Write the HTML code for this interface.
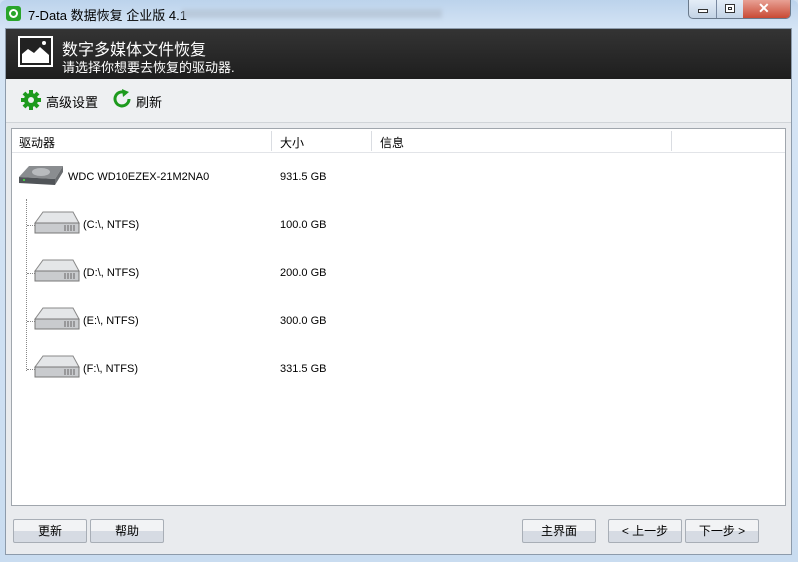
<!DOCTYPE html>
<html><head><meta charset="utf-8"><style>
*{margin:0;padding:0;box-sizing:border-box}
body{width:798px;height:562px;overflow:hidden;background:#cfe0f2;font-family:"Liberation Sans","Noto Sans CJK SC",sans-serif;font-size:12px;color:#000;position:relative}
.frame{position:absolute;left:0;top:0;width:798px;height:562px;background:linear-gradient(#bcd3ec,#d6e5f5 30px,#c9dcf0);border-radius:6px 6px 0 0}
.title{position:absolute;left:28px;top:5px;font-size:13px;color:#000}
.blur{position:absolute;left:182px;top:9px;width:260px;height:9px;background:#b3c2d3;filter:blur(2px);opacity:.7}
.client{position:absolute;left:5px;top:28px;width:787px;height:527px;background:#e9ebee;border:1px solid #8d9bab}
.head{position:absolute;left:0;top:0;width:785px;height:50px;background:linear-gradient(#343434,#1e1e1e);color:#fff}
.toolbar{position:absolute;left:0;top:50px;width:785px;height:44px;background:#eef0f2;border-bottom:1px solid #d0d4d8}
.list{position:absolute;left:5px;top:99px;width:775px;height:378px;background:#fff;border:1px solid #a0a6ad}
.colh{position:absolute;left:0;top:0;width:773px;height:24px;border-bottom:1px solid #e2e4e8;background:#fff}
.colh span{position:absolute;top:5px}
.sep{position:absolute;top:2px;width:1px;height:20px;background:#dadde2}
.row{position:absolute;font-size:11px}
.btn{position:absolute;top:490px;height:24px;border:1px solid #a8aeb6;border-radius:2px;background:linear-gradient(#f2f3f5 50%,#d6dbe3 50%);text-align:center;line-height:22px;font-size:12px}
.dot{position:absolute;border-left:1px dotted #888}
.doth{position:absolute;border-top:1px dotted #888;width:12px}
</style></head><body>
<div class="frame"></div>
<div style="position:absolute;left:6px;top:6px;width:15px;height:15px;background:#2aa52a;border-radius:3px"><div style="position:absolute;left:3px;top:3px;width:9px;height:9px;border:2px solid #fff;border-radius:50%"></div></div>
<div class="title">7-Data 数据恢复 企业版 4.1</div>
<div class="blur"></div>
<div style="position:absolute;left:688px;top:0;width:103px;height:19px;border:1px solid #6a7a8c;border-top:none;border-radius:0 0 5px 5px;overflow:hidden;background:linear-gradient(#e4edf7,#c4d4e6)">
<div style="position:absolute;left:27px;top:0;width:1px;height:19px;background:#7888a0"></div>
<div style="position:absolute;left:54px;top:0;width:48px;height:19px;background:linear-gradient(#e8a195,#c7452f)"></div>
<div style="position:absolute;left:9px;top:9px;width:10px;height:4px;border:1px solid #333;background:#fff"></div>
<div style="position:absolute;left:36px;top:4px;width:10px;height:9px;border:1px solid #333;background:#fff"><div style="margin:2px;width:4px;height:3px;border:1px solid #333"></div></div>
<div style="position:absolute;left:69px;top:0;color:#fff;font-weight:bold;font-size:14px">✕</div>
</div>
<div class="client">
<div class="head">
<div style="position:absolute;left:12px;top:7px;width:35px;height:31px;border:2px solid #fff;background:#222">
<svg width="31" height="27" viewBox="0 0 31 27"><path d="M2 25 L2 16 L8 11 L14 15 L20 9 L29 17 L29 25 Z" fill="#fff"/><circle cx="24" cy="5" r="2" fill="#fff"/></svg></div>
<div style="position:absolute;left:56px;top:7px;font-size:16px">数字多媒体文件恢复</div>
<div style="position:absolute;left:56px;top:28px;font-size:13px">请选择你想要去恢复的驱动器.</div>
</div>
<div class="toolbar">
<svg style="position:absolute;left:14px;top:10px" width="22" height="22" viewBox="0 0 22 22"><g fill="#1d9a1d"><circle cx="11" cy="11" r="7"/><g stroke="#1d9a1d" stroke-width="4"><line x1="11" y1="1" x2="11" y2="21"/><line x1="1" y1="11" x2="21" y2="11"/><line x1="4" y1="4" x2="18" y2="18"/><line x1="18" y1="4" x2="4" y2="18"/></g></g><circle cx="11" cy="11" r="3" fill="#eef0f2"/></svg>
<div style="position:absolute;left:40px;top:13px;font-size:13px">高级设置</div>
<svg style="position:absolute;left:105px;top:9px" width="22" height="22" viewBox="0 0 22 22"><path d="M18 11 A7 7 0 1 1 14 4.6" fill="none" stroke="#1d9a1d" stroke-width="3"/><path d="M11 1 L18 4 L12 9 Z" fill="#1d9a1d"/></svg>
<div style="position:absolute;left:130px;top:13px;font-size:13px">刷新</div>
</div>
<div class="list">
<div class="colh"><span style="left:7px">驱动器</span><div class="sep" style="left:259px"></div><span style="left:268px">大小</span><div class="sep" style="left:359px"></div><span style="left:368px">信息</span><div class="sep" style="left:659px"></div></div>
<svg style="position:absolute;left:5px;top:34px" width="48" height="24" viewBox="0 0 48 24"><path d="M2 14 L12 3 L46 3 L38 16 Z" fill="#8a8d90"/><path d="M2 14 L38 16 L38 22 L2 20 Z" fill="#505458"/><ellipse cx="24" cy="9" rx="9" ry="4" fill="#b8bbbe"/><path d="M38 16 L46 3 L46 9 L38 22 Z" fill="#6a6d70"/><rect x="6" y="16" width="2" height="2" fill="#4c4"/></svg>
<div class="row" style="left:56px;top:42px">WDC WD10EZEX-21M2NA0</div>
<div class="row" style="left:268px;top:42px">931.5 GB</div>
<div class="dot" style="left:14px;top:70px;height:172px"></div>
<div class="doth" style="left:15px;top:96px"></div><div class="doth" style="left:15px;top:144px"></div><div class="doth" style="left:15px;top:192px"></div><div class="doth" style="left:15px;top:240px"></div>
<svg style="position:absolute;left:21px;top:80px" width="48" height="26" viewBox="0 0 48 26"><path d="M2 14 L10 3 L40 3 L46 14 Z" fill="#e4e6e8" stroke="#888"/><path d="M2 14 L46 14 L46 24 L2 24 Z" fill="#c9cbce" stroke="#777"/><g stroke="#666"><line x1="32" y1="16" x2="32" y2="22"/><line x1="35" y1="16" x2="35" y2="22"/><line x1="38" y1="16" x2="38" y2="22"/><line x1="41" y1="16" x2="41" y2="22"/></g></svg>
<div class="row" style="left:71px;top:90px">(C:\, NTFS)</div><div class="row" style="left:268px;top:90px">100.0 GB</div>
<svg style="position:absolute;left:21px;top:128px" width="48" height="26" viewBox="0 0 48 26"><path d="M2 14 L10 3 L40 3 L46 14 Z" fill="#e4e6e8" stroke="#888"/><path d="M2 14 L46 14 L46 24 L2 24 Z" fill="#c9cbce" stroke="#777"/><g stroke="#666"><line x1="32" y1="16" x2="32" y2="22"/><line x1="35" y1="16" x2="35" y2="22"/><line x1="38" y1="16" x2="38" y2="22"/><line x1="41" y1="16" x2="41" y2="22"/></g></svg>
<div class="row" style="left:71px;top:138px">(D:\, NTFS)</div><div class="row" style="left:268px;top:138px">200.0 GB</div>
<svg style="position:absolute;left:21px;top:176px" width="48" height="26" viewBox="0 0 48 26"><path d="M2 14 L10 3 L40 3 L46 14 Z" fill="#e4e6e8" stroke="#888"/><path d="M2 14 L46 14 L46 24 L2 24 Z" fill="#c9cbce" stroke="#777"/><g stroke="#666"><line x1="32" y1="16" x2="32" y2="22"/><line x1="35" y1="16" x2="35" y2="22"/><line x1="38" y1="16" x2="38" y2="22"/><line x1="41" y1="16" x2="41" y2="22"/></g></svg>
<div class="row" style="left:71px;top:186px">(E:\, NTFS)</div><div class="row" style="left:268px;top:186px">300.0 GB</div>
<svg style="position:absolute;left:21px;top:224px" width="48" height="26" viewBox="0 0 48 26"><path d="M2 14 L10 3 L40 3 L46 14 Z" fill="#e4e6e8" stroke="#888"/><path d="M2 14 L46 14 L46 24 L2 24 Z" fill="#c9cbce" stroke="#777"/><g stroke="#666"><line x1="32" y1="16" x2="32" y2="22"/><line x1="35" y1="16" x2="35" y2="22"/><line x1="38" y1="16" x2="38" y2="22"/><line x1="41" y1="16" x2="41" y2="22"/></g></svg>
<div class="row" style="left:71px;top:234px">(F:\, NTFS)</div><div class="row" style="left:268px;top:234px">331.5 GB</div>
</div>
<div class="btn" style="left:7px;width:74px">更新</div>
<div class="btn" style="left:84px;width:74px">帮助</div>
<div class="btn" style="left:516px;width:74px">主界面</div>
<div class="btn" style="left:602px;width:74px">&lt; 上一步</div>
<div class="btn" style="left:679px;width:74px">下一步 &gt;</div>
</div>
</body></html>
